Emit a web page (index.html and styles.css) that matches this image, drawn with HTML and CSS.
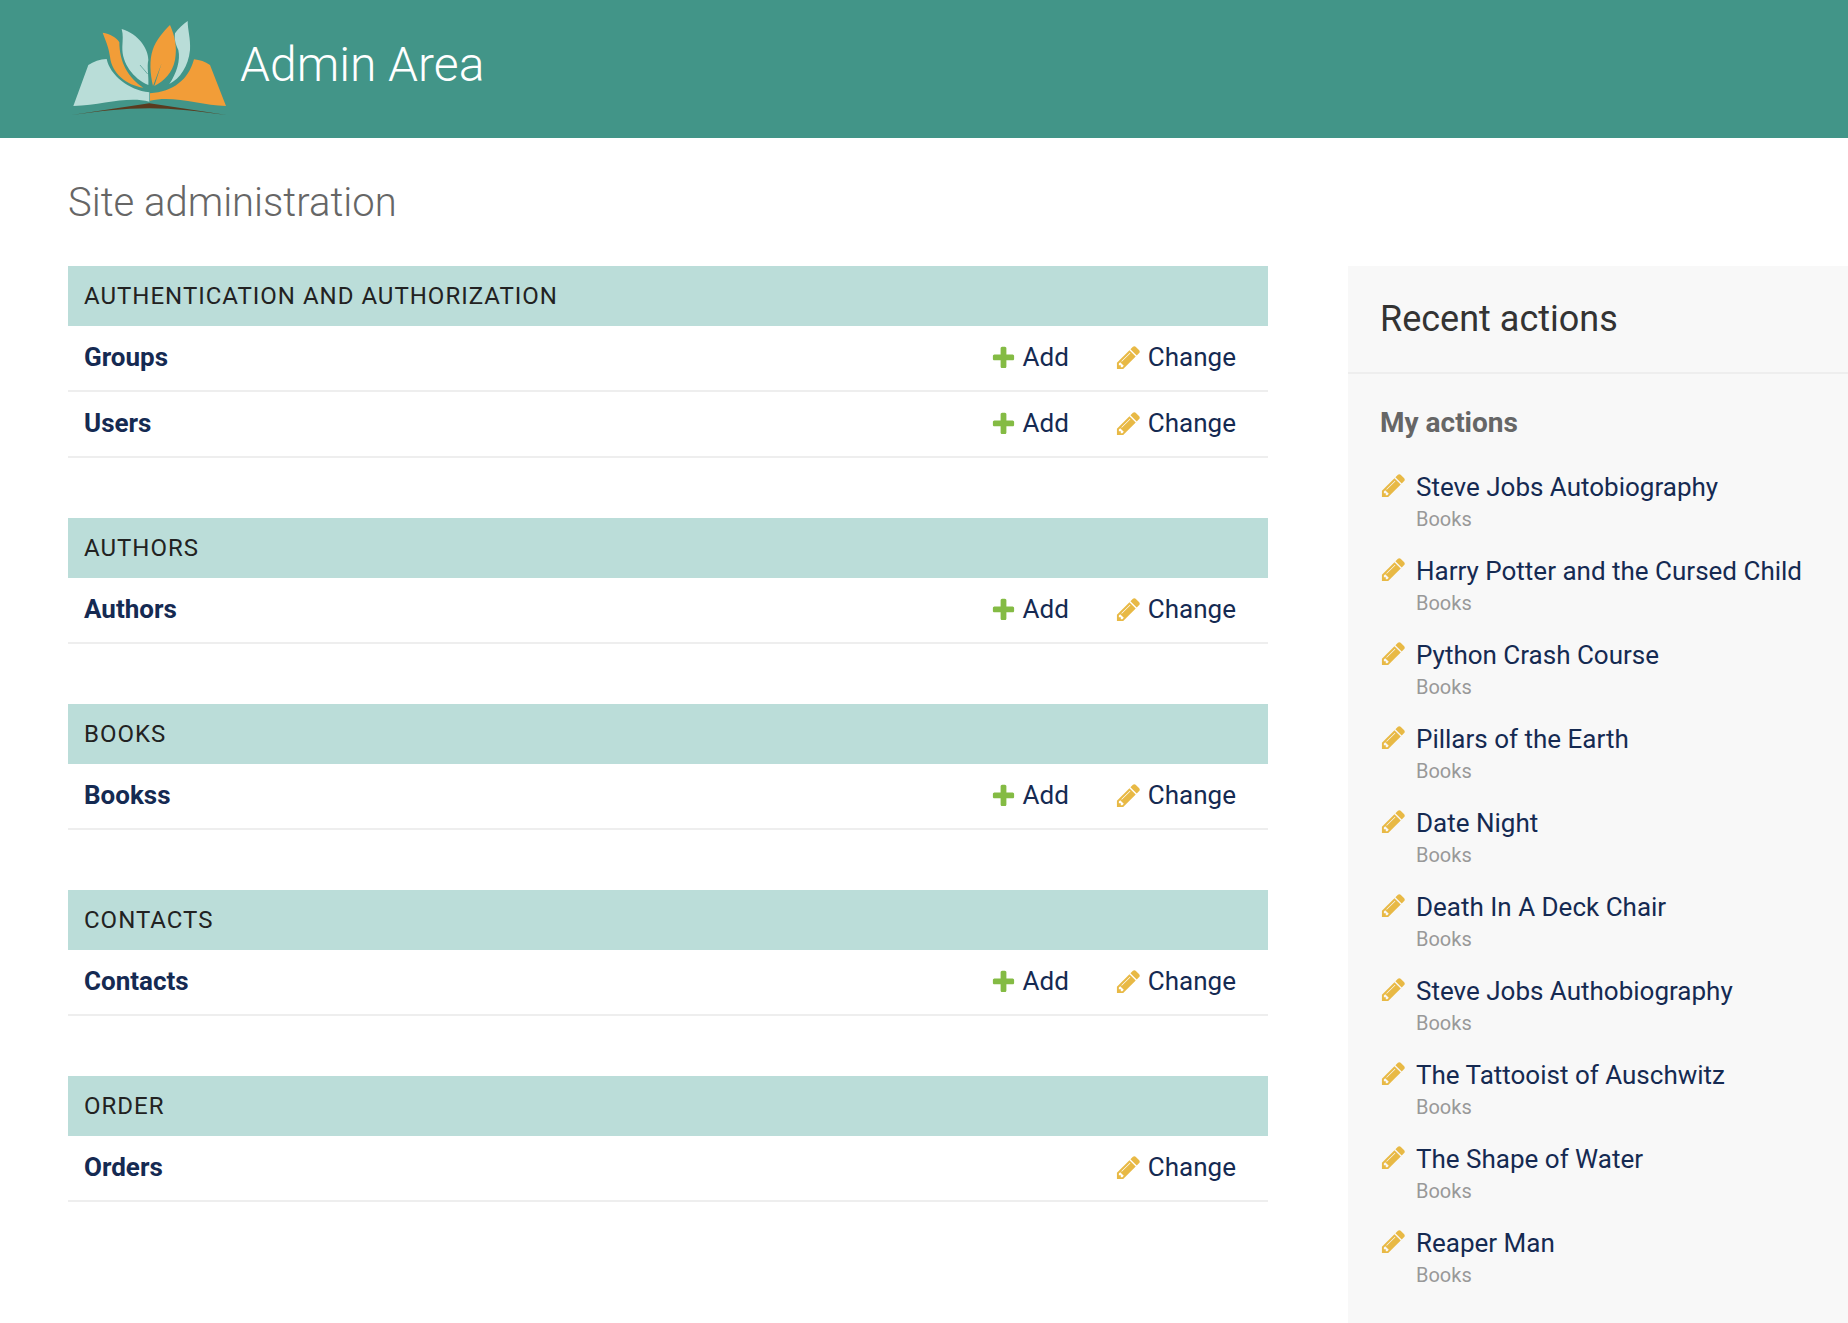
FILE: index.html
```html
<!DOCTYPE html>
<html lang="en">
<head>
    <meta charset="UTF-8">
    <title>Site administration</title>
    <link rel="stylesheet" href="styles.css">
</head>
<body>

    <!-- icons used all over the page -->
    <svg class="sprites" width="0" height="0">
        <symbol id="icon-add" viewBox="0 0 1792 1792">
            <path d="M1600 796v192q0 40-28 68t-68 28h-416v416q0 40-28 68t-68 28h-192q-40 0-68-28t-28-68v-416h-416q-40 0-68-28t-28-68v-192q0-40 28-68t68-28h416v-416q0-40 28-68t68-28h192q40 0 68 28t28 68v416h416q40 0 68 28t28 68z"/>
        </symbol>
        <symbol id="icon-change" viewBox="0 0 1792 1792">
            <path d="M491 1536l91-91-235-235-91 91v107h128v128h107zm523-928q0-22-22-22-10 0-17 7l-542 542q-7 7-7 17 0 22 22 22 10 0 17-7l542-542q7-7 7-17zm-54-192l416 416-832 832h-416v-416zm683 96q0 53-37 90l-166 166-416-416 166-165q36-38 90-38 53 0 91 38l235 234q37 39 37 91z"/>
        </symbol>
    </svg>

    <header class="site-header">
        <svg class="logo" viewBox="0 0 540 330" width="180" height="110">
            <path class="light" d="M40 288 L85 165 C100 155 120 148 140 147 C150 195 205 240 268 247 L268 275 C200 258 130 285 40 288 Z"/>
            <path class="orange" d="M498 288 L450 165 C435 155 420 150 402 148 C385 210 340 245 270 250 L270 272 C340 255 420 285 498 288 Z"/>
            <path class="orange" d="M128 68 C150 72 170 82 178 97 C178 155 205 205 250 233 C200 225 155 190 150 140 C146 110 136 90 128 68 Z"/>
            <path class="light" d="M185 57 C235 72 265 115 265 150 C260 170 267 200 265 225 C220 205 185 160 187 110 C188 90 190 75 185 57 Z"/>
            <path class="vein" d="M240 165 L263 192"/>
            <path class="orange" d="M330 45 C345 80 352 110 345 150 C337 190 312 213 283 228 L305 160 L279 228 C270 190 268 150 278 120 C288 90 310 65 330 45 Z"/>
            <path class="light" d="M383 33 C383 60 392 85 390 120 C385 170 360 205 328 222 C350 190 362 150 355 120 C345 100 343 85 345 70 C355 55 370 42 383 33 Z"/>
            <path class="brown" d="M35 315 L268 280 L500 315 C420 305 340 295 268 295 C190 295 110 305 35 315 Z"/>
        </svg>
        <h1 class="site-title">Admin Area</h1>
    </header>

    <h2 class="page-title">Site administration</h2>

    <div class="columns">
        <main class="app-list">

            <section class="module">
                <h3 class="module-caption">Authentication and Authorization</h3>
                <div class="model-row">
                    <a class="model-name" href="#">Groups</a>
                    <a class="action action-add" href="#"><svg><use href="#icon-add"/></svg>Add</a>
                    <a class="action action-change" href="#"><svg><use href="#icon-change"/></svg>Change</a>
                </div>
                <div class="model-row">
                    <a class="model-name" href="#">Users</a>
                    <a class="action action-add" href="#"><svg><use href="#icon-add"/></svg>Add</a>
                    <a class="action action-change" href="#"><svg><use href="#icon-change"/></svg>Change</a>
                </div>
            </section>

            <section class="module">
                <h3 class="module-caption">Authors</h3>
                <div class="model-row">
                    <a class="model-name" href="#">Authors</a>
                    <a class="action action-add" href="#"><svg><use href="#icon-add"/></svg>Add</a>
                    <a class="action action-change" href="#"><svg><use href="#icon-change"/></svg>Change</a>
                </div>
            </section>

            <section class="module">
                <h3 class="module-caption">Books</h3>
                <div class="model-row">
                    <a class="model-name" href="#">Bookss</a>
                    <a class="action action-add" href="#"><svg><use href="#icon-add"/></svg>Add</a>
                    <a class="action action-change" href="#"><svg><use href="#icon-change"/></svg>Change</a>
                </div>
            </section>

            <section class="module">
                <h3 class="module-caption">Contacts</h3>
                <div class="model-row">
                    <a class="model-name" href="#">Contacts</a>
                    <a class="action action-add" href="#"><svg><use href="#icon-add"/></svg>Add</a>
                    <a class="action action-change" href="#"><svg><use href="#icon-change"/></svg>Change</a>
                </div>
            </section>

            <section class="module">
                <h3 class="module-caption">Order</h3>
                <div class="model-row">
                    <a class="model-name" href="#">Orders</a>
                    <a class="action action-change" href="#"><svg><use href="#icon-change"/></svg>Change</a>
                </div>
            </section>

        </main>

        <aside class="recent">
            <h2 class="recent-title">Recent actions</h2>
            <h3 class="recent-sub">My actions</h3>
            <ul class="recent-list">
                <li><svg><use href="#icon-change"/></svg><div><a href="#">Steve Jobs Autobiography</a><span>Books</span></div></li>
                <li><svg><use href="#icon-change"/></svg><div><a href="#">Harry Potter and the Cursed Child</a><span>Books</span></div></li>
                <li><svg><use href="#icon-change"/></svg><div><a href="#">Python Crash Course</a><span>Books</span></div></li>
                <li><svg><use href="#icon-change"/></svg><div><a href="#">Pillars of the Earth</a><span>Books</span></div></li>
                <li><svg><use href="#icon-change"/></svg><div><a href="#">Date Night</a><span>Books</span></div></li>
                <li><svg><use href="#icon-change"/></svg><div><a href="#">Death In A Deck Chair</a><span>Books</span></div></li>
                <li><svg><use href="#icon-change"/></svg><div><a href="#">Steve Jobs Authobiography</a><span>Books</span></div></li>
                <li><svg><use href="#icon-change"/></svg><div><a href="#">The Tattooist of Auschwitz</a><span>Books</span></div></li>
                <li><svg><use href="#icon-change"/></svg><div><a href="#">The Shape of Water</a><span>Books</span></div></li>
                <li><svg><use href="#icon-change"/></svg><div><a href="#">Reaper Man</a><span>Books</span></div></li>
            </ul>
        </aside>
    </div>

</body>
</html>
```

FILE: styles.css
```css
html, body {
    height: 100%;
}
body {
    margin: 0;
    font-family: Roboto, "Liberation Sans", sans-serif;
    background-color: #fff;
    overflow: hidden;
}
a {
    color: #152a52;
    text-decoration: none;
}
.sprites {
    position: absolute;
}

/* header */
.site-header {
    display: flex;
    align-items: flex-start;
    height: 138px;
    box-sizing: border-box;
    padding: 10px 60px;
    background-color: #429588;
}
.logo .light { fill: #b9ddd8; }
.logo .orange { fill: #f29d38; }
.logo .brown { fill: #5a3a1e; }
.logo .vein { fill: none; stroke: #429588; stroke-width: 2; }
.site-title {
    margin: 31px 0 0;
    font-size: 48px;
    line-height: 48px;
    font-weight: 300;
    color: #fff;
}
.page-title {
    margin: 41px 0 0 68px;
    font-size: 40px;
    line-height: 48px;
    font-weight: 300;
    color: #666;
}

/* two columns */
.columns {
    display: flex;
    justify-content: space-between;
    margin-top: 39px;
    padding-left: 68px;
}
.app-list {
    width: 1200px;
}
.module {
    margin-bottom: 60px;
}
.module-caption {
    margin: 0;
    height: 60px;
    padding-left: 16px;
    font-size: 24px;
    line-height: 60px;
    font-weight: 400;
    letter-spacing: 1px;
    text-transform: uppercase;
    color: #222;
    background-color: #bbddd9;
}
.model-row {
    display: flex;
    align-items: center;
    height: 66px;
    box-sizing: border-box;
    padding: 0 32px 2px 16px;
    border-bottom: 2px solid #eee;
    font-size: 26px;
}
.model-name {
    margin-right: auto;
    font-weight: 700;
}
.action {
    display: flex;
    align-items: center;
}
.action svg {
    width: 27px;
    height: 27px;
}
.action-add {
    margin-right: 46px;
}
.action-add svg {
    margin-right: 6px;
    fill: #84bb44;
}
.action-change svg {
    margin-right: 6px;
    fill: #e8b945;
}

/* sidebar */
.recent {
    width: 500px;
    height: 1060px;
    box-sizing: border-box;
    background-color: #f8f8f8;
}
.recent-title {
    margin: 0;
    height: 108px;
    padding-left: 32px;
    font-size: 36px;
    line-height: 107px;
    font-weight: 400;
    color: #333;
    border-bottom: 2px solid #eee;
    box-sizing: border-box;
}
.recent-sub {
    margin: 33px 0 0 32px;
    font-size: 28px;
    line-height: 32px;
    color: #666;
}
.recent-list {
    margin: 29px 0 0;
    padding: 0 0 0 32px;
    list-style: none;
}
.recent-list li {
    display: flex;
    height: 84px;
}
.recent-list svg {
    flex: none;
    width: 27px;
    height: 27px;
    margin: 4px 9px 0 0;
    fill: #e8b945;
}
.recent-list a {
    display: block;
    font-size: 26px;
    line-height: 38px;
}
.recent-list span {
    display: block;
    font-size: 20px;
    line-height: 26px;
    color: #999;
}
```
